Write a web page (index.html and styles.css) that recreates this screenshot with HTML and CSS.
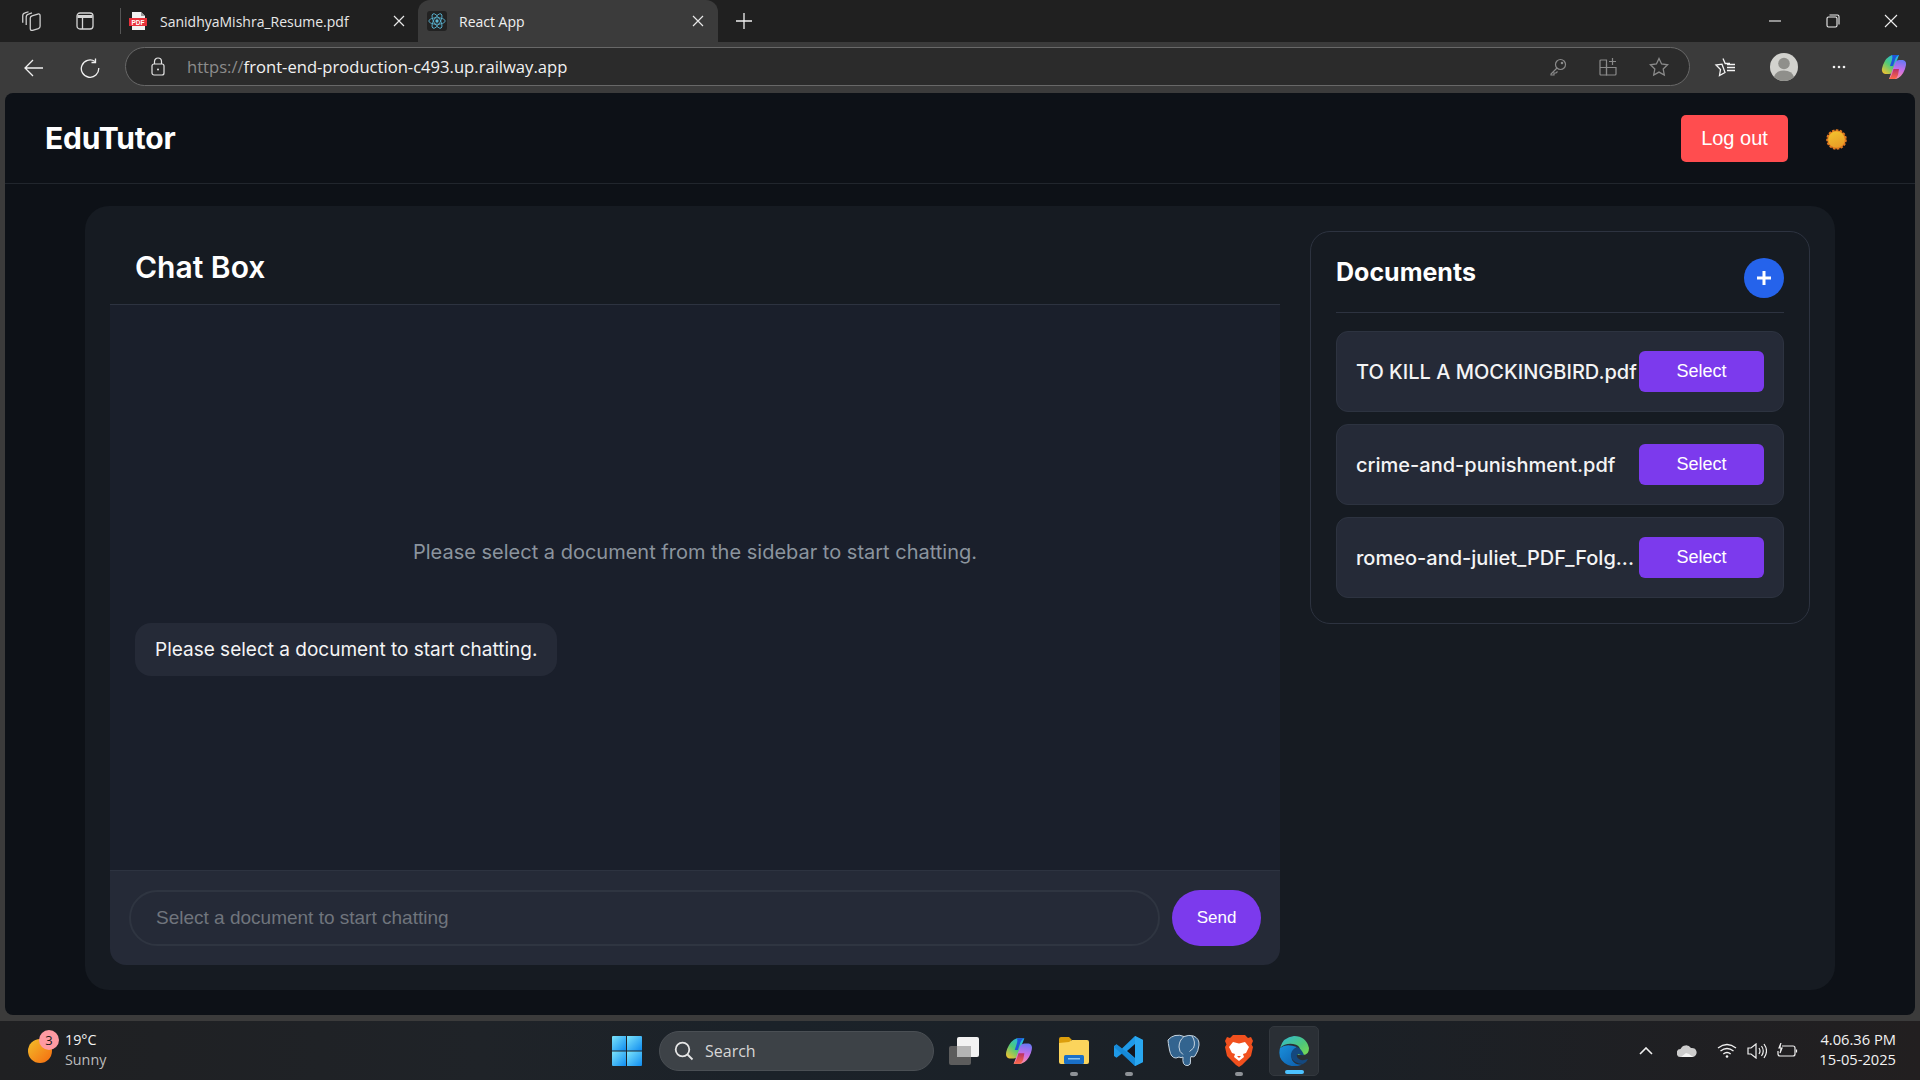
FILE: index.html
```html
<!DOCTYPE html>
<html lang="en">
	<head>
		<meta charset="UTF-8">
		<title>React App</title>
		<link rel="stylesheet" href="styles.css">
	</head>
	<body>
		<svg class="defs" width="0" height="0">
			<defs>
				<linearGradient id="copA" x1="0.8" y1="0" x2="0.1" y2="1">
					<stop offset="0" stop-color="#1fb6f2"/>
					<stop offset="0.5" stop-color="#4fca78"/>
					<stop offset="1" stop-color="#f6c22e"/>
				</linearGradient>
				<linearGradient id="copB" x1="0.6" y1="0" x2="0.4" y2="1">
					<stop offset="0" stop-color="#6a78f4"/>
					<stop offset="0.5" stop-color="#c86ee8"/>
					<stop offset="1" stop-color="#ff90a0"/>
				</linearGradient>
				<linearGradient id="copC" x1="0" y1="0" x2="0" y2="1">
					<stop offset="0" stop-color="#b83068"/>
					<stop offset="1" stop-color="#ff6a48"/>
				</linearGradient>
				<linearGradient id="edgeA" x1="0" y1="0" x2="1" y2="1">
					<stop offset="0" stop-color="#30b8d8"/>
					<stop offset="0.6" stop-color="#50c878"/>
					<stop offset="1" stop-color="#7edc50"/>
				</linearGradient>
				<linearGradient id="edgeB" x1="0" y1="0" x2="1" y2="1">
					<stop offset="0" stop-color="#1a90dc"/>
					<stop offset="1" stop-color="#0c5aa8"/>
				</linearGradient>
				<linearGradient id="winLogo" x1="0" y1="0" x2="1" y2="1">
					<stop offset="0" stop-color="#7ce4fb"/>
					<stop offset="1" stop-color="#0f8cf0"/>
				</linearGradient>
				<linearGradient id="sunny" x1="0" y1="0" x2="1" y2="1">
					<stop offset="0" stop-color="#f2bf2a"/>
					<stop offset="1" stop-color="#f56a10"/>
				</linearGradient>
				<linearGradient id="sunDisc" x1="0.3" y1="0" x2="0.7" y2="1">
					<stop offset="0" stop-color="#f3c22e"/>
					<stop offset="1" stop-color="#e89a26"/>
				</linearGradient>
			</defs>
		</svg>

		<div class="tabbar">
			<span class="tb-btn tb-first">
				<svg width="22" height="22" viewBox="2 1 18 19" fill="none" stroke="#cfcfcf" stroke-width="1.100"><path d="M3 12V6q0-2 2-2.500l3-1"/><path d="M6 14V7q0-2 2-2.500l3-1"/><path d="M9.500 8q0-1.500 1.500-2l5-1.500q2-.5 2 1.500v9q0 1.500-1.500 2l-5 1.500q-2 .5-2-1.500z"/></svg>
			</span>
			<span class="tb-btn tb-second">
				<svg width="20" height="20" viewBox="0 0 20 20" fill="none" stroke="#d4d4d4" stroke-width="1.300"><rect x="2" y="2" width="16" height="16" rx="3"/><path d="M2.500 5.500h15" stroke-width="3"/><path d="M7.500 6v12"/></svg>
			</span>
			<span class="tab-divider"></span>
			<div class="tab">
				<svg class="tab-icon" width="20" height="20" viewBox="0 0 20 20"><path d="M4 1h9l4 4v14H4z" fill="#f2f2f2"/><path d="M13 1l4 4h-4z" fill="#9a9a9a"/><rect x="1" y="7" width="18" height="8" fill="#e8303a"/><text class="pdf-mark" x="10" y="13.500" text-anchor="middle">PDF</text></svg>
				<span class="tab-title">SanidhyaMishra_Resume.pdf</span>
				<span class="tab-close">
					<svg width="12" height="12" viewBox="0 0 12 12" stroke="#e8e8e8" stroke-width="1.200"><path d="M1 1l10 10M11 1L1 11"/></svg>
				</span>
			</div>
			<div class="tab tab-active">
				<span class="react-tile">
					<svg width="18" height="18" viewBox="-11 -11 22 22" fill="none" stroke="#5bb8d6" stroke-width="1"><circle r="2" fill="#5bb8d6" stroke="none"/><ellipse rx="10" ry="4"/><ellipse rx="10" ry="4" transform="rotate(60)"/><ellipse rx="10" ry="4" transform="rotate(120)"/></svg>
				</span>
				<span class="tab-title">React App</span>
				<span class="tab-close">
					<svg width="12" height="12" viewBox="0 0 12 12" stroke="#e8e8e8" stroke-width="1.200"><path d="M1 1l10 10M11 1L1 11"/></svg>
				</span>
			</div>
			<span class="tab-new">
				<svg width="18" height="18" viewBox="0 0 18 18" stroke="#f0f0f0" stroke-width="1.300"><path d="M9 1v16M1 9h16"/></svg>
			</span>
			<div class="win-controls">
				<svg width="14" height="14" viewBox="0 0 14 14" stroke="#f0f0f0" stroke-width="1.100"><path d="M1 7h12"/></svg>
				<svg width="14" height="14" viewBox="0 0 14 14" fill="none" stroke="#f0f0f0" stroke-width="1.100"><rect x="1" y="3" width="10" height="10" rx="1.500"/><path d="M3.500 1h8q1.500 0 1.500 1.500v8"/></svg>
				<svg width="14" height="14" viewBox="0 0 14 14" stroke="#f0f0f0" stroke-width="1.100"><path d="M1 1l12 12M13 1L1 13"/></svg>
			</div>
		</div>

		<div class="addressbar">
			<span class="nav-btn nav-back">
				<svg width="20" height="20" viewBox="0 0 20 20" fill="none" stroke="#f0f0f0" stroke-width="1.300"><path d="M1 10h18M9 2l-8 8 8 8"/></svg>
			</span>
			<span class="nav-btn nav-reload">
				<svg width="20" height="20" viewBox="0 0 20 20" fill="none" stroke="#f0f0f0" stroke-width="1.300"><path d="M15 3.500a8.700 8.700 0 1 0 3.700 6.500"/><path d="M15.500 .5v4h-4"/></svg>
			</span>
			<div class="urlbox">
				<svg class="lock" width="14" height="19" viewBox="0 0 14 19" fill="none" stroke="#e4e4e4" stroke-width="1.200"><rect x="1" y="7" width="12" height="11" rx="2"/><path d="M3.500 7V4.500a3.500 3.500 0 0 1 7 0V7"/><circle cx="7" cy="12.500" r="1" fill="#e4e4e4" stroke="none"/></svg>
				<span class="url"><span class="url-scheme">https://</span>front-end-production-c493.up.railway.app</span>
				<span class="url-tools">
					<svg width="18" height="18" viewBox="0 0 18 18" fill="none" stroke="#8a8a8a" stroke-width="1.200"><circle cx="11.500" cy="6.500" r="5"/><path d="M8 10l-6 6v1h3v-2h2l1.500-1.500"/><circle cx="13" cy="5" r=".7" fill="#8a8a8a"/></svg>
					<svg width="18" height="18" viewBox="0 0 18 18" fill="none" stroke="#8a8a8a" stroke-width="1.200"><path d="M1 3q0-1 1-1h5.500v15H2q-1 0-1-1z"/><path d="M1 9.500h16V16q0 1-1 1H7.500V6"/><path d="M13.500 0v7M10 3.500h7"/></svg>
					<svg width="20" height="20" viewBox="0 0 20 20" fill="none" stroke="#8a8a8a" stroke-width="1.300"><path d="M10 1.500l2.600 5.500 6 .8-4.400 4.200 1.100 6L10 15.100 4.700 18l1.100-6L1.400 7.800l6-.8z"/></svg>
				</span>
			</div>
			<div class="nav-right">
				<svg width="22" height="20" viewBox="0 0 22 20" fill="none" stroke="#f4f4f4" stroke-width="1.300"><path d="M9 1.500l2.200 5h4.800M11 15.500l-5.500 3 1-6L2 8l6-.8z"/><path d="M13 10.500h8M13 13.500h8M13 7.500h8"/></svg>
				<svg width="28" height="28" viewBox="0 0 28 28"><circle cx="14" cy="14" r="14" fill="#d2d2ce"/><circle cx="14" cy="10.500" r="5.800" fill="#8f8f8b"/><path d="M4 24q2-6.500 10-6.500T24 24q-4 4-10 4T4 24z" fill="#8f8f8b"/></svg>
				<svg width="14" height="4" viewBox="0 0 14 4" fill="#f0f0f0"><circle cx="2" cy="2" r="1.300"/><circle cx="7" cy="2" r="1.300"/><circle cx="12" cy="2" r="1.300"/></svg>
				<svg width="28" height="26" viewBox="0 0 28 26"><path d="M3 11Q6 3 12 1h7l-5 13q-1 6-5 6H5Q0 19 3 11z" fill="url(#copA)"/><path d="M25 15q-3 8-9 10H9l5-13q1-6 5-6h4q5 1 2 9z" fill="url(#copB)"/><path d="M12 1h7q-3 1-4 5l-2 6h-3l2-6q1-3 0-5z" fill="#1f56d8"/><path d="M13.500 15l-1.500 5q-1 3-3 5h6q2-1 3-4l1-6z" fill="url(#copC)"/></svg>
			</div>
		</div>

		<div class="page">
			<header class="topbar">
				<h1 class="brand">EduTutor</h1>
				<div class="topbar-actions">
					<button class="btn-logout">Log out</button>
					<svg class="theme-sun" width="21" height="21" viewBox="0 0 21 21"><circle cx="10.500" cy="10.500" r="9.300" fill="#e27a1f" stroke="#e27a1f" stroke-width="2" stroke-dasharray="2.500 1.400"/><circle cx="10.500" cy="10.500" r="8.300" fill="url(#sunDisc)"/></svg>
				</div>
			</header>

			<main class="panel">
				<section class="chat">
					<div class="chat-head">
						<h2>Chat Box</h2>
					</div>
					<div class="chat-body">
						<p class="chat-empty">Please select a document from the sidebar to start chatting.</p>
						<div class="bubble">Please select a document to start chatting.</div>
					</div>
					<form class="chat-form">
						<input class="chat-input" type="text" placeholder="Select a document to start chatting" disabled>
						<button class="btn-send" type="button">Send</button>
					</form>
				</section>

				<aside class="docs">
					<div class="docs-head">
						<h3>Documents</h3>
						<span class="btn-add">
							<svg width="16" height="16" viewBox="0 0 16 16" stroke="#fff" stroke-width="3"><path d="M8 1v14M1 8h14"/></svg>
						</span>
					</div>
					<ul class="doc-list">
						<li class="doc-item">
							<span class="doc-name">TO KILL A MOCKINGBIRD.pdf</span>
							<button class="btn-select">Select</button>
						</li>
						<li class="doc-item">
							<span class="doc-name">crime-and-punishment.pdf</span>
							<button class="btn-select">Select</button>
						</li>
						<li class="doc-item">
							<span class="doc-name">romeo-and-juliet_PDF_Folg...</span>
							<button class="btn-select">Select</button>
						</li>
					</ul>
				</aside>
			</main>
		</div>

		<footer class="taskbar">
			<div class="weather">
				<span class="weather-icon">
					<svg width="24" height="24" viewBox="0 0 24 24"><ellipse cx="12" cy="12" rx="12" ry="12" fill="url(#sunny)"/></svg>
					<span class="weather-badge">3</span>
				</span>
				<span class="weather-text">
					<span class="temp">19°C</span>
					<span class="cond">Sunny</span>
				</span>
			</div>

			<div class="task-center">
				<svg class="win-logo" width="30" height="30" viewBox="0 0 30 30" fill="url(#winLogo)"><path d="M1 0h13v14.500H0V1q0-1 1-1z"/><path d="M15 0h14q1 0 1 1v13.500H15z"/><path d="M0 15.500h14V30H1q-1 0-1-1z"/><path d="M15 15.500h15V29q0 1-1 1H15z"/></svg>
				<div class="search">
					<svg width="20" height="20" viewBox="0 0 20 20" fill="none" stroke="#e6e6e6" stroke-width="1.800"><circle cx="8.500" cy="8.500" r="6.800"/><path d="M13.500 13.500l5 5"/></svg>
					<span>Search</span>
				</div>
				<div class="task-apps">
					<span class="task-app">
						<svg width="30" height="28" viewBox="0 0 30 28"><rect x="0" y="9" width="22" height="19" rx="2" fill="#5c5c5c"/><rect x="8" y="0" width="22" height="20" rx="2" fill="#f2f2f2"/><rect x="8" y="9" width="14" height="11" fill="#b4b4b4"/></svg>
					</span>
					<span class="task-app">
						<svg width="30" height="28" viewBox="0 0 28 26"><path d="M3 11Q6 3 12 1h7l-5 13q-1 6-5 6H5Q0 19 3 11z" fill="url(#copA)"/><path d="M25 15q-3 8-9 10H9l5-13q1-6 5-6h4q5 1 2 9z" fill="url(#copB)"/><path d="M12 1h7q-3 1-4 5l-2 6h-3l2-6q1-3 0-5z" fill="#1f56d8"/><path d="M13.500 15l-1.500 5q-1 3-3 5h6q2-1 3-4l1-6z" fill="url(#copC)"/></svg>
					</span>
					<span class="task-app is-open">
						<svg width="30" height="27" viewBox="0 0 30 27"><path d="M0 2q0-2 2-2h8l3 3h-1v3H0z" fill="#dc9e0c"/><path d="M0 6l10-1 3-2h15q2 0 2 2v20q0 2-2 2H2q-2 0-2-2z" fill="#fbd45c"/><rect x="5" y="18" width="20" height="9" rx="1.500" fill="#1a70c8"/><rect x="9" y="21" width="12" height="1.500" fill="#8cc4ee"/></svg>
					</span>
					<span class="task-app is-open">
						<svg width="30" height="30" viewBox="0 0 30 30"><path d="M21 0l8 4v22l-8 4-13-12.500-5.500 4.200L0 20V10l2.500-1.700L8 12.500z" fill="#1f9ae8"/><path d="M21 8l-8 7 8 7z" fill="#15161c"/><path d="M21 0l8 4v22l-8 4z" fill="#29a7f0"/><path d="M2.500 8.300L21 22.500V30L0 11z" fill="#0f7dcc" opacity=".55"/></svg>
					</span>
					<span class="task-app">
						<svg width="34" height="33" viewBox="0 0 34 33" fill="#33648f" stroke="#c6d4e0" stroke-width="1"><path d="M8 1.500q5-1 9 1 5-2 9.500-.5 6 2.500 5.500 9-.5 6-4 11-1.500 1.500-4 .5-1 2.500-.5 4.500.5 4-2.500 4.500t-4.500-2q-1-2.500-.5-6.500-2 1.500-4 0l-3 1q-5 0-6.500-8T1 6q3-3.500 7-4.500z"/><path d="M17 2.500q-5 4-5 10.500 0 5 4 7.500M25 2q4 6 1.500 12l-4 3.500" fill="none"/></svg>
					</span>
					<span class="task-app is-open">
						<svg width="28" height="32" viewBox="0 0 28 32"><path d="M8 0h12l3 3 3-1 2 4-1.500 3.500L28 12l-2 9-9 9-3 2-3-2-9-9-2-9 1.500-2.500L0 6l2-4 3 1z" fill="#f1501e"/><path d="M8 7l6 1.500L20 7l4 5-3 6-3 1 1 3-5 4-5-4 1-3-3-1-3-6z" fill="#fff"/><path d="M12 21h4l-2 2z" fill="#f1501e"/></svg>
					</span>
					<span class="task-app is-active">
						<svg width="30" height="30" viewBox="0 0 30 30"><path d="M1 12Q4 1 15 0q12 0 15 12 0 7-6 7h-6q3-1 3-5 0-5-7-6Q6 7 1 12z" fill="url(#edgeA)"/><path d="M1 12Q-2 24 9 29q8 3 15-1-7 2-11-4-2-8 5-13-11-4-17 1z" fill="url(#edgeB)"/><path d="M18 11q-7 3-6 10 3 7 12 7 4-2 5-5-8 3-11-2-1-2 1-3 5 2 6 1-3-7-7-8z" fill="#14487e"/></svg>
					</span>
				</div>
			</div>

			<div class="tray">
				<svg width="14" height="8" viewBox="0 0 14 8" fill="none" stroke="#f0f0f0" stroke-width="1.600"><path d="M1 7l6-6 6 6"/></svg>
				<svg class="tray-cloud" width="20" height="12" viewBox="0 0 20 12"><path d="M4 12a4 4 0 0 1-.5-8A6 6 0 0 1 14 3a4.500 4.500 0 0 1 2 9z" fill="#cdcdcd"/><path d="M4 12l5-4 3 1 4 3z" fill="#f4f4f4"/></svg>
				<svg class="tray-wifi" width="20" height="15" viewBox="0 0 20 15" fill="none" stroke="#f0f0f0" stroke-width="1.300"><path d="M1 5q9-7 18 0M3.500 8q6.500-5 13 0M6.300 11q3.700-3 7.400 0"/><circle cx="10" cy="13.500" r="1.300" fill="#f0f0f0" stroke="none"/></svg>
				<svg class="tray-sound" width="20" height="16" viewBox="0 0 20 16" fill="none" stroke="#f0f0f0" stroke-width="1.200"><path d="M1 5h3l5-4v14l-5-4H1z"/><path d="M12 5q2 3 0 6M14.500 3q3.500 5 0 10M17 1q5 7 0 14"/></svg>
				<svg class="tray-batt" width="21" height="15" viewBox="0 0 21 15" fill="none" stroke="#f0f0f0" stroke-width="1.200"><path d="M5 3h11q2 0 2 2v6q0 2-2 2H3q-2 0-2-2V8"/><path d="M19.500 6.500v3"/><path d="M4 0L2 5h3l-2 5" fill="#f0f0f0"/></svg>
				<div class="clock">
					<span>4.06.36 PM</span>
					<span>15-05-2025</span>
				</div>
			</div>
		</footer>
	</body>
</html>
```

FILE: styles.css
```css
* {
	margin: 0;
	padding: 0;
	box-sizing: border-box;
	list-style: none;
}

html,
body {
	width: 1920px;
	height: 1080px;
	overflow: hidden;
}

body {
	display: flex;
	flex-direction: column;
	background: #3b3b3b;
	font-family: "Inter", "Liberation Sans", sans-serif;
	color: #fff;
}

.defs {
	position: absolute;
}

/* browser tabs */
.tabbar {
	height: 42px;
	flex: none;
	display: flex;
	align-items: center;
	background: #202020;
	font-family: "Open Sans", "Noto Sans", sans-serif;
	font-size: 14px;
}

.tb-btn {
	display: flex;
	align-items: center;
}

.tb-first {
	margin-left: 21px;
}

.tb-second {
	margin-left: 32px;
}

.tab-divider {
	width: 1px;
	height: 26px;
	margin: 0 7px 0 25px;
	background: #555;
}

.tab {
	width: 290px;
	height: 42px;
	display: flex;
	align-items: center;
	color: #e8e8e8;
}

.tab-icon {
	flex: none;
	margin-right: 12px;
}

.pdf-mark {
	font-family: "Liberation Sans", sans-serif;
	font-size: 6.500px;
	font-weight: 700;
	fill: #fff;
}

.tab-title {
	flex: 1;
	white-space: nowrap;
}

.tab-close {
	display: flex;
	margin-right: 13px;
}

.tab-active {
	width: 300px;
	padding-left: 9px;
	background: #3b3b3b;
	border-radius: 12px 12px 0 0;
	color: #f0f0f0;
}

.tab-active .tab-close {
	margin-right: 14px;
}

.react-tile {
	width: 20px;
	height: 20px;
	display: flex;
	align-items: center;
	justify-content: center;
	margin-right: 12px;
	background: #222;
	border-radius: 3px;
}

.tab-new {
	display: flex;
	margin-left: 17px;
}

.win-controls {
	display: flex;
	align-items: center;
	gap: 44px;
	margin-left: auto;
	margin-right: 22px;
}

/* address row */
.addressbar {
	height: 51px;
	flex: none;
	display: flex;
	align-items: center;
	background: #3b3b3b;
}

.nav-btn {
	display: flex;
}

.nav-back {
	margin-left: 24px;
}

.nav-reload {
	margin-left: 36px;
}

.urlbox {
	width: 1565px;
	height: 39px;
	display: flex;
	align-items: center;
	margin: -2px 0 0 25px;
	padding-left: 25px;
	background: #2b2b2b;
	border: 1.500px solid #686868;
	border-radius: 20px;
}

.lock {
	flex: none;
}

.url {
	margin-left: 22px;
	font-family: "Open Sans", "Noto Sans", sans-serif;
	font-size: 16.600px;
	color: #f2f2f2;
	white-space: nowrap;
}

.url-scheme {
	color: #8c8c8c;
}

.url-tools {
	display: flex;
	align-items: center;
	gap: 32px;
	margin-left: auto;
	margin-right: 20px;
}

.nav-right {
	display: flex;
	align-items: center;
	gap: 34px;
	margin: -1px 0 0 24px;
}

/* app */
.page {
	width: 1910px;
	height: 922px;
	flex: none;
	margin-left: 5px;
	display: flex;
	flex-direction: column;
	background: #0d1117;
	border-radius: 8px;
}

.topbar {
	height: 91px;
	flex: none;
	display: flex;
	align-items: center;
	justify-content: space-between;
	padding: 0 68px 0 40px;
	border-bottom: 1px solid #21262d;
}

.brand {
	font-size: 30px;
	font-weight: 700;
	letter-spacing: -.2px;
}

.topbar-actions {
	display: flex;
	align-items: center;
	gap: 38px;
}

.btn-logout {
	width: 107px;
	height: 47px;
	background: #ff4d4f;
	border: 0;
	border-radius: 5px;
	color: #fff;
	font-family: "Liberation Sans", sans-serif;
	font-size: 20px;
}

.theme-sun {
	margin-top: 2px;
}

.panel {
	height: 784px;
	flex: none;
	display: flex;
	gap: 30px;
	margin: 22px 80px 0;
	padding: 25px;
	background: #161b22;
	border-radius: 24px;
}

.chat {
	width: 1170px;
	flex: none;
	display: flex;
	flex-direction: column;
}

.chat-head {
	height: 74px;
	flex: none;
	padding: 16px 25px 0;
	border-bottom: 1px solid #2d3340;
}

.chat-head h2 {
	font-size: 30px;
	font-weight: 600;
	line-height: 40px;
}

.chat-body {
	flex: 1;
	display: flex;
	flex-direction: column;
	padding: 233px 25px 0;
	background: #1a1f2b;
	border-bottom: 1px solid #2d3340;
}

.chat-empty {
	font-size: 20px;
	line-height: 28px;
	text-align: center;
	color: #8b949e;
}

.bubble {
	align-self: flex-start;
	height: 53px;
	margin-top: 57px;
	padding: 0 20px;
	background: #252a37;
	border-radius: 16px;
	font-size: 19px;
	line-height: 53px;
	color: #f4f4f5;
}

.chat-form {
	height: 94px;
	flex: none;
	display: flex;
	gap: 12px;
	padding: 19px 19px 0 19px;
	background: #252a37;
	border-radius: 0 0 16px 16px;
}

.chat-input {
	flex: 1;
	height: 56px;
	padding: 0 25px;
	background: transparent;
	border: 2px solid #2f3541;
	border-radius: 28px;
	font-family: "Liberation Sans", sans-serif;
	font-size: 19px;
}

.chat-input::placeholder {
	color: #70757d;
}

.btn-send {
	width: 89px;
	height: 56px;
	background: #7c3aed;
	border: 0;
	border-radius: 28px;
	color: #fff;
	font-family: "Liberation Sans", sans-serif;
	font-size: 17px;
}

.docs {
	width: 500px;
	height: 393px;
	flex: none;
	padding: 0 25px;
	border: 1px solid #2d3340;
	border-radius: 20px;
}

.docs-head {
	height: 81px;
	display: flex;
	justify-content: space-between;
	padding-top: 26px;
	border-bottom: 1px solid #2d3340;
}

.docs-head h3 {
	margin-top: -1px;
	font-size: 25px;
	font-weight: 700;
	line-height: 30px;
}

.btn-add {
	width: 40px;
	height: 40px;
	display: flex;
	align-items: center;
	justify-content: center;
	background: #2563eb;
	border-radius: 50%;
}

.doc-list {
	display: flex;
	flex-direction: column;
	gap: 12px;
	margin-top: 18px;
}

.doc-item {
	height: 81px;
	display: flex;
	align-items: center;
	justify-content: space-between;
	padding: 0 19px 0 19px;
	background: #252a37;
	border: 1px solid #2d3340;
	border-radius: 12px;
}

.doc-name {
	flex: 1;
	min-width: 0;
	font-size: 20px;
	font-weight: 500;
	color: #f4f4f5;
	white-space: nowrap;
}

.btn-select {
	width: 125px;
	height: 41px;
	flex: none;
	background: #7c3aed;
	border: 0;
	border-radius: 6px;
	color: #fff;
	font-family: "Liberation Sans", sans-serif;
	font-size: 18px;
}

/* windows taskbar */
.taskbar {
	flex: 1;
	margin-top: 6px;
	display: flex;
	align-items: center;
	background: linear-gradient(90deg, #1f2022 0%, #1f2328 25%, #1b2229 40%, #1b2026 70%, #221f20 100%);
	font-family: "Open Sans", "Noto Sans", sans-serif;
}

.weather {
	width: 612px;
	flex: none;
	display: flex;
	align-items: center;
	gap: 13px;
	padding-left: 28px;
}

.weather-icon {
	position: relative;
	width: 24px;
	height: 24px;
	display: flex;
	margin-top: 1px;
}

.weather-badge {
	position: absolute;
	top: -9px;
	left: 11px;
	width: 20px;
	height: 20px;
	background: #ff9aa2;
	border-radius: 50%;
	color: #1a1a1a;
	font-size: 13px;
	line-height: 20px;
	text-align: center;
}

.weather-text {
	display: flex;
	flex-direction: column;
	margin-top: -2px;
	font-size: 14.300px;
	line-height: 20px;
}

.temp {
	color: #f2f2f2;
}

.cond {
	color: #bdbdbd;
}

.task-center {
	display: flex;
	align-items: center;
}

.win-logo {
	flex: none;
}

.search {
	width: 275px;
	height: 40px;
	display: flex;
	align-items: center;
	gap: 11px;
	margin-left: 17px;
	padding-left: 14px;
	background: #3d4247;
	border: 1px solid #4a4f54;
	border-radius: 20px;
	color: #d6d6d6;
	font-size: 16px;
}

.task-apps {
	display: flex;
	align-items: center;
	gap: 5px;
	margin-left: 5px;
}

.task-app {
	position: relative;
	width: 50px;
	height: 50px;
	display: flex;
	align-items: center;
	justify-content: center;
	border-radius: 5px;
}

.is-open::after {
	content: "";
	position: absolute;
	bottom: 0;
	left: 21px;
	width: 8px;
	height: 4px;
	background: #8e9297;
	border-radius: 2px;
}

.is-active {
	background: #2a2f35;
	border: 1px solid #33383e;
}

.is-active::after {
	content: "";
	position: absolute;
	bottom: 1px;
	left: 15px;
	width: 19px;
	height: 4px;
	background: #4cc2ff;
	border-radius: 2px;
}

.tray {
	flex: 1;
	display: flex;
	align-items: center;
	justify-content: flex-end;
	padding-right: 24px;
}

.tray-cloud {
	margin-left: 24px;
}

.tray-wifi {
	margin-left: 20px;
}

.tray-sound {
	margin-left: 10px;
}

.tray-batt {
	margin-left: 10px;
}

.clock {
	display: flex;
	flex-direction: column;
	align-items: flex-end;
	margin-top: -3px;
	margin-left: 21px;
	font-size: 14.700px;
	line-height: 20px;
	color: #f2f2f2;
}
```
